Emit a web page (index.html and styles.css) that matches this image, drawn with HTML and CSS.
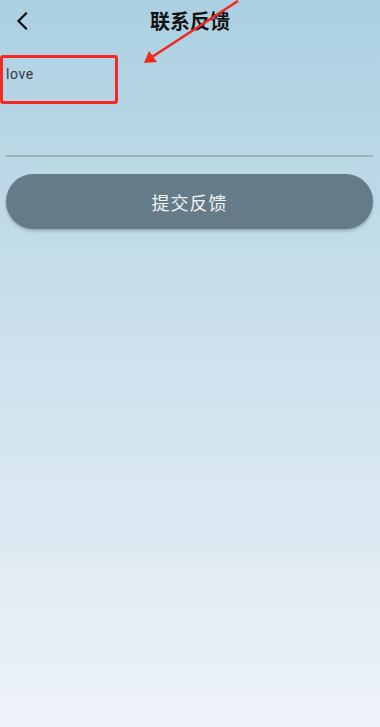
FILE: index.html
```html
<!DOCTYPE html>
<html lang="zh">
<head>
<meta charset="utf-8">
<title>联系反馈</title>
<link rel="stylesheet" href="styles.css">
</head>
<body>
<div class="page">
  <header class="header">
    <span class="back">
      <svg width="12" height="18" viewBox="0 0 12 18"><path d="M10 1.5 L2.5 9 L10 16.5" fill="none" stroke="#111" stroke-width="2.2" stroke-linecap="square"/></svg>
    </span>
    <h1 class="title">联系反馈</h1>
  </header>
  <main class="content">
    <div class="field">
      <div class="field-text">love</div>
    </div>
    <button class="submit">提交反馈</button>
  </main>
  <div class="mark-box"></div>
  <svg class="mark-arrow" width="380" height="80" viewBox="0 0 380 80">
    <line x1="238" y1="1" x2="152" y2="57" stroke="#f02a1e" stroke-width="2.6"/>
    <polygon points="144,63 149,51 157,62" fill="#f02a1e"/>
  </svg>
</div>
</body>
</html>
```
FILE: styles.css
```css
html, body {
  margin: 0;
  padding: 0;
}
body {
  font-family: "Noto Sans CJK SC", "Noto Sans", sans-serif;
}
.page {
  position: relative;
  width: 380px;
  min-height: 727px;
  background: linear-gradient(180deg, #abd0e1 0%, #cde1ec 48%, #eef3f9 100%);
  overflow: hidden;
}
.header {
  position: relative;
  height: 42px;
  display: flex;
  align-items: center;
  justify-content: center;
}
.back {
  position: absolute;
  left: 16px;
  top: 12px;
  display: flex;
}
.title {
  margin: 0;
  font-size: 20px;
  font-weight: 700;
  color: #111;
  line-height: 1;
}
.content {
  padding: 0 7px 0 6px;
}
.field {
  height: 115px;
  border-bottom: 2px solid #a5b0bb;
  padding-top: 22px;
  box-sizing: border-box;
}
.field-text {
  font-family: Roboto, "Liberation Sans", sans-serif;
  font-size: 14px;
  line-height: 20px;
  color: #333a40;
  letter-spacing: 0.6px;
}
.submit {
  display: block;
  width: 100%;
  height: 55px;
  margin-top: 17px;
  border: none;
  border-radius: 28px;
  background: #667b88;
  color: #eef3f6;
  font-family: "Noto Sans CJK SC", "Noto Sans", sans-serif;
  font-size: 18px;
  letter-spacing: 1px;
  box-shadow: 0 2px 3px rgba(60, 80, 95, 0.35);
}
.mark-box {
  position: absolute;
  left: 0;
  top: 55px;
  width: 118px;
  height: 49px;
  border: 3px solid #f42a22;
  border-radius: 3px;
  box-sizing: border-box;
}
.mark-arrow {
  position: absolute;
  left: 0;
  top: 0;
}
```
